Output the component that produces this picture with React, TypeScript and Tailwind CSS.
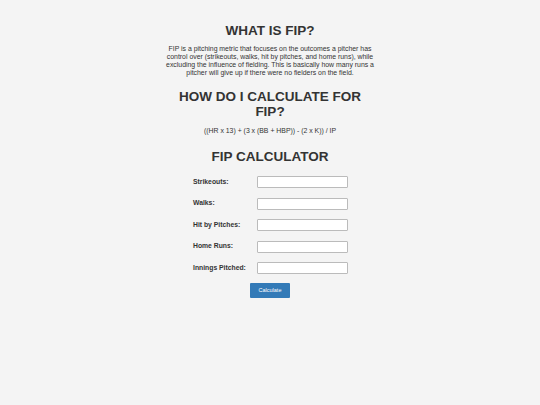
import React from "react";

const rows = ["Strikeouts:", "Walks:", "Hit by Pitches:", "Home Runs:", "Innings Pitched:"];

export default function App() {
  return (
    <div
      className="w-[540px] h-[405px] bg-[#f4f4f4] text-[#333] overflow-hidden"
      style={{ fontFamily: '"Liberation Sans", Arial, sans-serif' }}
    >
      <div className="w-[216px] mx-auto text-center pt-[23px]">
        <h2 className="text-[13.5px] leading-[15px] font-bold">WHAT IS FIP?</h2>
        <p className="text-[6.9px] leading-[8px] mt-[7px]">
          FIP is a pitching metric that focuses on the outcomes a pitcher has control over (strikeouts, walks, hit by pitches, and home runs), while excluding the influence of fielding. This is basically how many runs a pitcher will give up if there were no fielders on the field.
        </p>
        <h2 className="w-[200px] mx-auto text-[13.5px] leading-[15px] font-bold mt-[12px]">HOW DO I CALCULATE FOR FIP?</h2>
        <p className="text-[6.9px] leading-[8px] mt-[8px]">((HR x 13) + (3 x (BB + HBP)) - (2 x K)) / IP</p>
        <h2 className="text-[13.5px] leading-[15px] font-bold mt-[14px]">FIP CALCULATOR</h2>
      </div>
      <div className="w-[155px] ml-[193px] mt-[12px] flex flex-col gap-[9.5px]">
        {rows.map((r) => (
          <div key={r} className="flex items-center justify-between">
            <label className="text-[6.8px] font-bold">{r}</label>
            <input className="w-[91px] h-[12px] bg-white border border-[#bbb] rounded-[1px]" />
          </div>
        ))}
      </div>
      <div className="flex justify-center mt-[9px]">
        <button className="w-[40px] h-[15px] bg-[#337ab7] text-white text-[5.5px] rounded-[1px]">Calculate</button>
      </div>
    </div>
  );
}
